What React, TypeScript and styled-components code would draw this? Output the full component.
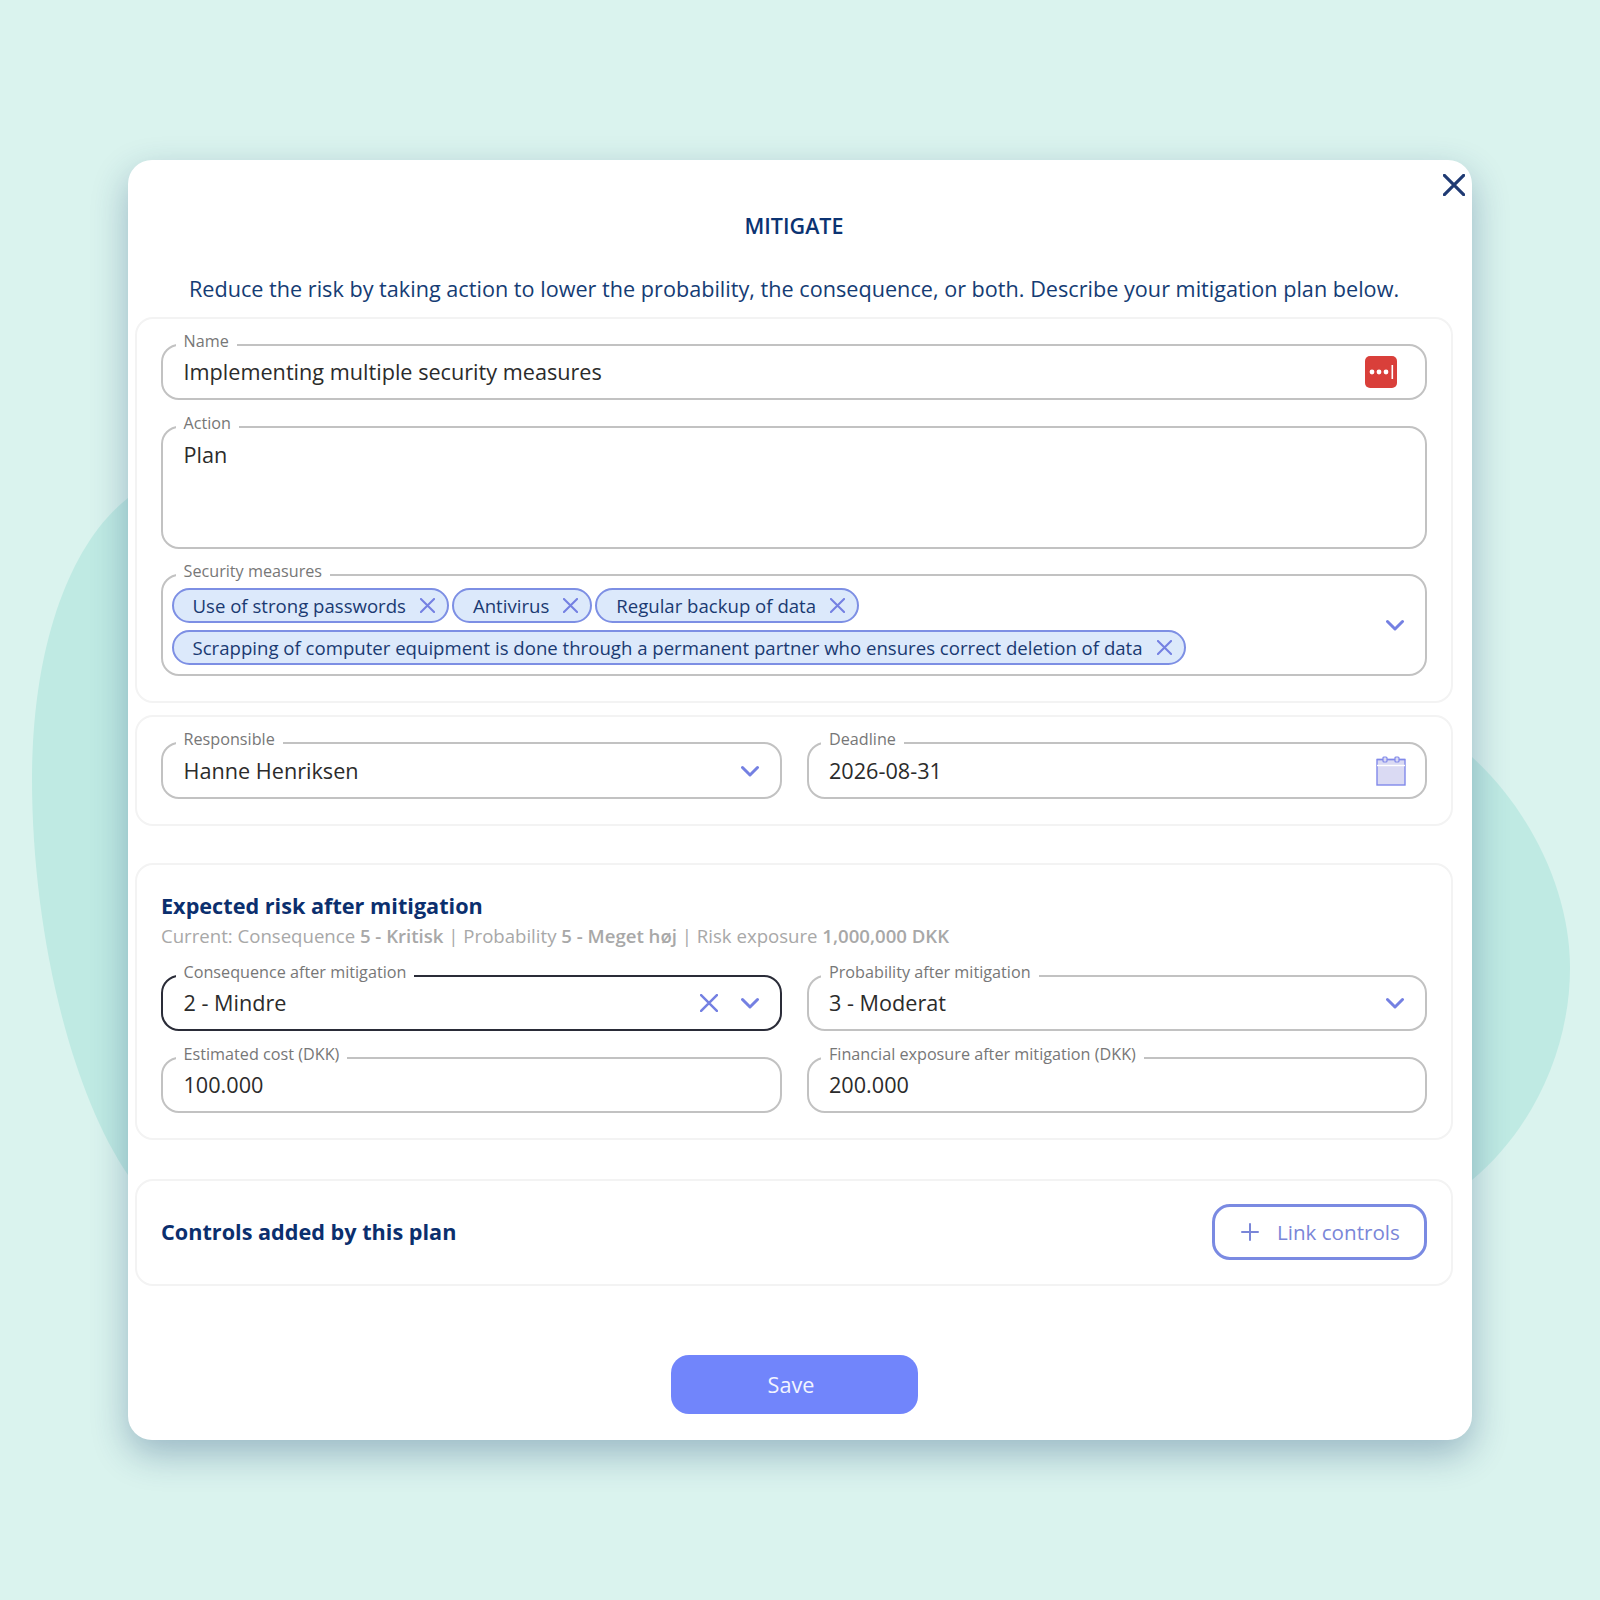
import styled, { createGlobalStyle } from 'styled-components';

const GlobalStyle = createGlobalStyle`
  * {
    box-sizing: border-box;
  }
  body {
    margin: 0;
    font-family: 'Open Sans', sans-serif;
    background-color: #daf3ee;
  }
`;

const Page = styled.div`
  position: relative;
  height: 1600px;
  padding-top: 160px;
  overflow: hidden;
  background-color: #daf3ee;
`;

const Blob = styled.svg`
  position: absolute;
  top: 0;
  left: 0;
`;

const Modal = styled.div`
  position: relative;
  width: 1344px;
  height: 1280px;
  margin: 0 auto;
  padding: 52px 19px 26px 7px;
  display: flex;
  flex-direction: column;
  align-items: stretch;
  background-color: #fff;
  border-radius: 24px;
  box-shadow: 0 14px 36px rgba(20, 60, 110, 0.32);
`;

const CloseButton = styled.div`
  position: absolute;
  top: 14px;
  right: 7px;
  width: 22px;
  height: 22px;
  display: flex;
`;

const Title = styled.h1`
  margin: 0;
  font-size: 21.5px;
  line-height: 27px;
  font-weight: 600;
  text-align: center;
  color: #0b3372;
`;

const Description = styled.p`
  margin: 35px 0 13px;
  font-size: 21.65px;
  line-height: 30px;
  text-align: center;
  color: #153c74;
`;

const Section = styled.section<{ $top?: number; $gap?: number }>`
  margin-top: ${(p) => p.$top ?? 0}px;
  padding: 25px 24px;
  display: flex;
  flex-direction: column;
  gap: ${(p) => p.$gap ?? 26}px;
  border: 2px solid #f3f3f3;
  border-radius: 18px;
`;

const Row = styled.div`
  display: grid;
  grid-template-columns: 1fr 1fr;
  gap: 25px;
`;

const Field = styled.div<{ $height?: number; $focused?: boolean }>`
  position: relative;
  height: ${(p) => p.$height ?? 56}px;
  padding: 0 19px 0 20.5px;
  display: flex;
  align-items: center;
  gap: 20px;
  border: 2px solid ${(p) => (p.$focused ? '#2a2c38' : '#c2c2c2')};
  border-radius: 18px;
`;

const FieldLabel = styled.label`
  position: absolute;
  top: -16px;
  left: 12.5px;
  padding: 0 8px;
  font-size: 16.2px;
  line-height: 22px;
  color: #777;
  background-color: #fff;
`;

const Value = styled.div`
  flex: 1;
  font-size: 21.65px;
  line-height: 30px;
  color: #2b2b2b;
`;

const TextValue = styled(Value)`
  align-self: flex-start;
  margin-top: 12px;
`;

const ChipList = styled.div`
  flex: 1;
  display: flex;
  flex-wrap: wrap;
  gap: 7px 3px;
  margin: 3px 0 0 -12px;
`;

const Chip = styled.div`
  height: 35px;
  padding: 0 12px 0 19px;
  display: flex;
  align-items: center;
  gap: 14px;
  font-size: 18.6px;
  color: #1a3a72;
  background-color: #dce9fb;
  border: 2px solid #7d8fe4;
  border-radius: 18px;
`;

const Heading = styled.h2`
  margin: 0;
  font-size: 21.65px;
  line-height: 30px;
  font-weight: 700;
  color: #0b2f6e;
`;

const RiskHeader = styled.div`
  margin-top: 1px;
  display: flex;
  flex-direction: column;
  gap: 2px;
`;

const CurrentLine = styled.div`
  font-size: 18.6px;
  line-height: 26px;
  color: #a8a8a8;

  b {
    font-weight: 600;
  }
`;

const ControlsRow = styled(Section)`
  flex-direction: row;
  align-items: center;
  justify-content: space-between;
  padding-top: 23px;
  padding-bottom: 24px;
`;

const LinkButton = styled.button`
  width: 215px;
  height: 56px;
  padding: 0 0 0 26px;
  display: flex;
  align-items: center;
  gap: 18px;
  font-family: inherit;
  font-size: 20.6px;
  color: #7a86d8;
  background-color: #fff;
  border: 3px solid #7a8ae2;
  border-radius: 18px;
`;

const Footer = styled.div`
  margin-top: 69px;
  display: flex;
  justify-content: center;
`;

const SaveButton = styled.button`
  width: 247px;
  height: 59px;
  padding: 0 6px 0 0;
  font-family: inherit;
  font-size: 21.65px;
  color: #f2f4ff;
  background-color: #7185fb;
  border: none;
  border-radius: 18px;
`;

const IconSlot = styled.div`
  display: flex;
  margin-right: 9px;
`;

const ClearSlot = styled.div`
  display: flex;
  margin-right: 3px;
`;

const ChevronIcon = () => (
  <svg width="20" height="12" viewBox="0 0 20 12" fill="none">
    <path d="M1.5 2.5L9 10l7.5-7.5" stroke="#7480e2" strokeWidth="3" strokeLinecap="round" strokeLinejoin="round" />
  </svg>
);

const CrossIcon = ({ size = 16, color = '#7480e2', width = 2.2 }: { size?: number; color?: string; width?: number }) => (
  <svg width={size} height={size} viewBox="0 0 16 16" fill="none">
    <path d="M1 1l14 14M15 1L1 15" stroke={color} strokeWidth={width} strokeLinecap="round" />
  </svg>
);

const PasswordIcon = () => (
  <svg width="32" height="32" viewBox="0 0 32 32">
    <rect width="32" height="32" rx="5" fill="#d93f3a" />
    <circle cx="7" cy="16" r="2.4" fill="#fff" />
    <circle cx="14" cy="16" r="2.4" fill="#fff" />
    <circle cx="21" cy="16" r="2.4" fill="#fff" />
    <rect x="26.5" y="9" width="1.6" height="14" fill="#fff" />
  </svg>
);

const CalendarIcon = () => (
  <svg width="30" height="30" viewBox="0 0 30 30">
    <rect x="1" y="3.5" width="28" height="25.5" fill="#dadaf3" stroke="#8189ea" strokeWidth="1.4" />
    <path d="M1 9.5h28" stroke="#fff" strokeWidth="1.4" />
    <path d="M1 3.5h28" stroke="#8189ea" strokeWidth="1.4" />
    <rect x="7" y="1" width="4" height="5" rx="1" fill="#dadaf3" stroke="#8189ea" strokeWidth="1.2" />
    <rect x="19" y="1" width="4" height="5" rx="1" fill="#dadaf3" stroke="#8189ea" strokeWidth="1.2" />
  </svg>
);

const PlusIcon = () => (
  <svg width="18" height="18" viewBox="0 0 18 18" fill="none">
    <path d="M9 1v16M1 9h16" stroke="#7a86d8" strokeWidth="2" strokeLinecap="round" />
  </svg>
);

const measures = [
  'Use of strong passwords',
  'Antivirus',
  'Regular backup of data',
  'Scrapping of computer equipment is done through a permanent partner who ensures correct deletion of data',
];

const App = () => {
  return (
    <Page>
      <GlobalStyle />
      <Blob width="1600" height="1600" viewBox="0 0 1600 1600">
        <path
          d="M128 498C68 545 32 650 32 779C32 930 70 1090 128 1175L1472 1180C1532 1130 1570 1050 1570 968C1570 890 1530 810 1472 757Z"
          fill="#bfeae3"
        />
      </Blob>
      <Modal>
        <CloseButton>
          <CrossIcon size={22} color="#1f3a73" width={2.3} />
        </CloseButton>
        <Title>MITIGATE</Title>
        <Description>
          Reduce the risk by taking action to lower the probability, the consequence, or both. Describe your mitigation
          plan below.
        </Description>

        <Section $gap={25.5}>
          <Field>
            <FieldLabel>Name</FieldLabel>
            <Value>Implementing multiple security measures</Value>
            <IconSlot>
              <PasswordIcon />
            </IconSlot>
          </Field>
          <Field $height={123}>
            <FieldLabel>Action</FieldLabel>
            <TextValue>Plan</TextValue>
          </Field>
          <Field $height={102}>
            <FieldLabel>Security measures</FieldLabel>
            <ChipList>
              {measures.map((measure) => (
                <Chip key={measure}>
                  {measure}
                  <CrossIcon size={15} />
                </Chip>
              ))}
            </ChipList>
            <ChevronIcon />
          </Field>
        </Section>

        <Section $top={12}>
          <Row>
            <Field $height={57}>
              <FieldLabel>Responsible</FieldLabel>
              <Value>Hanne Henriksen</Value>
              <ChevronIcon />
            </Field>
            <Field $height={57}>
              <FieldLabel>Deadline</FieldLabel>
              <Value>2026-08-31</Value>
              <CalendarIcon />
            </Field>
          </Row>
        </Section>

        <Section $top={37}>
          <RiskHeader>
            <Heading>Expected risk after mitigation</Heading>
            <CurrentLine>
              Current: Consequence <b>5 - Kritisk</b> | Probability <b>5 - Meget høj</b> | Risk exposure{' '}
              <b>1,000,000 DKK</b>
            </CurrentLine>
          </RiskHeader>
          <Row>
            <Field $focused>
              <FieldLabel>Consequence after mitigation</FieldLabel>
              <Value>2 - Mindre</Value>
              <ClearSlot>
                <CrossIcon size={18} />
              </ClearSlot>
              <ChevronIcon />
            </Field>
            <Field>
              <FieldLabel>Probability after mitigation</FieldLabel>
              <Value>3 - Moderat</Value>
              <ChevronIcon />
            </Field>
          </Row>
          <Row>
            <Field>
              <FieldLabel>Estimated cost (DKK)</FieldLabel>
              <Value>100.000</Value>
            </Field>
            <Field>
              <FieldLabel>Financial exposure after mitigation (DKK)</FieldLabel>
              <Value>200.000</Value>
            </Field>
          </Row>
        </Section>

        <ControlsRow $top={39}>
          <Heading>Controls added by this plan</Heading>
          <LinkButton>
            <PlusIcon />
            Link controls
          </LinkButton>
        </ControlsRow>

        <Footer>
          <SaveButton>Save</SaveButton>
        </Footer>
      </Modal>
    </Page>
  );
};

export default App;
